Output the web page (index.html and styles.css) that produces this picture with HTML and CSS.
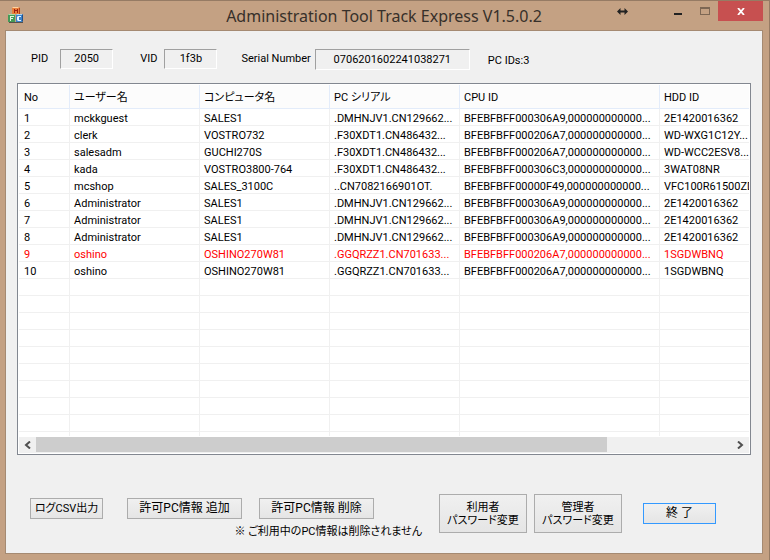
FILE: index.html
```html
<!DOCTYPE html>
<html lang="ja">
<head>
  <meta charset="UTF-8">
  <meta name="viewport" content="width=device-width, initial-scale=1.0">
  <title>Administration Tool Track Express V1.5.0.2</title>
  <link rel="stylesheet" href="styles.css">
</head>
<body>

  <div class="window">
    <header class="title-bar">
      <svg class="app-icon" width="16" height="16" viewBox="0 0 16 16" aria-hidden="true">
        <path d="M1 15h14v1H1z" fill="#55504a"/>
        <path d="M4 1l1-1h6l1 1v6H4z" fill="#e8803c"/>
        <path d="M5 0h6l-1 1H4z" fill="#ffd2a0"/>
        <path d="M11 1h1v6h-1z" fill="#b5421c"/>
        <path d="M6 2h1v1h2V2h1v4H9V4H7v2H6z" fill="#a01c10"/>
        <path d="M0 8l1-1h6v8H0z" fill="#459a58"/>
        <path d="M1 7h6v1H0z" fill="#a8dca8"/>
        <path d="M2 9h4v1H3v1h2v1H3v2H2z" fill="#e4f5e0"/>
        <path d="M8 8l1-1h6v7l-1 1H8z" fill="#3c83c8"/>
        <path d="M9 7h6l-1 1H8z" fill="#acd4f4"/>
        <path d="M14 8l1-1v7l-1 1z" fill="#1f4f8c"/>
        <path d="M10 9h3v1h-2v3h2v1h-3l-1-1v-3z" fill="#e6f2ff"/>
      </svg>
      <h1 class="title">Administration Tool Track Express V1.5.0.2</h1>
      <div class="controls">
        <button type="button" class="ctrl" aria-label="移動">
          <svg width="11" height="7" viewBox="0 0 11 7"><path d="M0 3.5L3.5 0v2.500h4V0L11 3.500 7.500 7V4.500h-4V7z" fill="#222"/></svg>
        </button>
        <span class="spacer"></span>
        <button type="button" class="ctrl" aria-label="最小化">
          <svg width="10" height="10" viewBox="0 0 10 10"><path d="M1 7h8v2H1z" fill="#222"/></svg>
        </button>
        <button type="button" class="ctrl" aria-label="最大化">
          <svg width="10" height="8" viewBox="0 0 10 8"><path d="M0 0h10v8H0zM1 2v5h8V2z" fill="#7d6754" fill-rule="evenodd"/></svg>
        </button>
        <button type="button" class="ctrl close" aria-label="閉じる">
          <svg width="8" height="7" viewBox="0 0 8 7"><path d="M1 0l6 7M7 0L1 7" stroke="#fff" stroke-width="1.800"/></svg>
        </button>
      </div>
    </header>

    <main class="client">
      <div class="device">
        <label for="pid">PID</label>
        <input type="text" id="pid" class="field" value="2050" readonly>
        <label for="vid" class="lab-vid">VID</label>
        <input type="text" id="vid" class="field" value="1f3b" readonly>
        <label for="serial" class="lab-serial">Serial Number</label>
        <input type="text" id="serial" class="field wide" value="0706201602241038271" readonly>
        <span class="pc-ids">PC IDs:3</span>
      </div>

      <div class="list">
        <div class="list-view">
          <table class="pc-table">
            <colgroup>
              <col class="col-no"><col class="col-mid"><col class="col-mid"><col class="col-mid"><col class="col-cpu"><col>
            </colgroup>
            <thead>
              <tr><th>No</th><th>ユーザー名</th><th>コンピュータ名</th><th>PC シリアル</th><th>CPU ID</th><th>HDD ID</th></tr>
            </thead>
            <tbody>
              <tr><td>1</td><td>mckkguest</td><td>SALES1</td><td>.DMHNJV1.CN129662...</td><td>BFEBFBFF000306A9,000000000000...</td><td>2E1420016362</td></tr>
              <tr><td>2</td><td>clerk</td><td>VOSTRO732</td><td>.F30XDT1.CN486432...</td><td>BFEBFBFF000206A7,000000000000...</td><td>WD-WXG1C12Y...</td></tr>
              <tr><td>3</td><td>salesadm</td><td>GUCHI270S</td><td>.F30XDT1.CN486432...</td><td>BFEBFBFF000206A7,000000000000...</td><td>WD-WCC2ESV8...</td></tr>
              <tr><td>4</td><td>kada</td><td>VOSTRO3800-764</td><td>.F30XDT1.CN486432...</td><td>BFEBFBFF000306C3,000000000000...</td><td>3WAT08NR</td></tr>
              <tr><td>5</td><td>mcshop</td><td>SALES_3100C</td><td>..CN7082166901OT.</td><td>BFEBFBFF00000F49,000000000000...</td><td>VFC100R61500ZD</td></tr>
              <tr><td>6</td><td>Administrator</td><td>SALES1</td><td>.DMHNJV1.CN129662...</td><td>BFEBFBFF000306A9,000000000000...</td><td>2E1420016362</td></tr>
              <tr><td>7</td><td>Administrator</td><td>SALES1</td><td>.DMHNJV1.CN129662...</td><td>BFEBFBFF000306A9,000000000000...</td><td>2E1420016362</td></tr>
              <tr><td>8</td><td>Administrator</td><td>SALES1</td><td>.DMHNJV1.CN129662...</td><td>BFEBFBFF000306A9,000000000000...</td><td>2E1420016362</td></tr>
              <tr class="current"><td>9</td><td>oshino</td><td>OSHINO270W81</td><td>.GGQRZZ1.CN701633...</td><td>BFEBFBFF000206A7,000000000000...</td><td>1SGDWBNQ</td></tr>
              <tr><td>10</td><td>oshino</td><td>OSHINO270W81</td><td>.GGQRZZ1.CN701633...</td><td>BFEBFBFF000206A7,000000000000...</td><td>1SGDWBNQ</td></tr>
              <!-- 空行 -->
              <tr><td></td><td></td><td></td><td></td><td></td><td></td></tr>
              <tr><td></td><td></td><td></td><td></td><td></td><td></td></tr>
              <tr><td></td><td></td><td></td><td></td><td></td><td></td></tr>
              <tr><td></td><td></td><td></td><td></td><td></td><td></td></tr>
              <tr><td></td><td></td><td></td><td></td><td></td><td></td></tr>
              <tr><td></td><td></td><td></td><td></td><td></td><td></td></tr>
              <tr><td></td><td></td><td></td><td></td><td></td><td></td></tr>
              <tr><td></td><td></td><td></td><td></td><td></td><td></td></tr>
              <tr><td></td><td></td><td></td><td></td><td></td><td></td></tr>
              <tr><td></td><td></td><td></td><td></td><td></td><td></td></tr>
            </tbody>
          </table>
        </div>
        <div class="scrollbar">
          <button type="button" class="arrow" aria-label="左へ">
            <svg width="7" height="8" viewBox="0 0 7 8"><path d="M6 0.500L2 4l4 3.500" fill="none" stroke="#505050" stroke-width="2"/></svg>
          </button>
          <div class="track"><div class="thumb"></div></div>
          <button type="button" class="arrow" aria-label="右へ">
            <svg width="7" height="8" viewBox="0 0 7 8"><path d="M1 0.500L5 4 1 7.500" fill="none" stroke="#505050" stroke-width="2"/></svg>
          </button>
        </div>
      </div>

      <div class="actions">
        <div class="action-main">
          <div class="action-row">
            <button type="button" class="btn small">ログCSV出力</button>
            <button type="button" class="btn long add">許可PC情報 追加</button>
            <button type="button" class="btn long">許可PC情報 削除</button>
          </div>
          <p class="note">※ ご利用中のPC情報は削除されません</p>
        </div>
        <button type="button" class="btn small tall user">利用者<br>パスワード変更</button>
        <button type="button" class="btn small tall">管理者<br>パスワード変更</button>
        <button type="button" class="btn exit">終 了</button>
      </div>
    </main>
  </div>

</body>
</html>
```
FILE: styles.css
```css
* {
  box-sizing: border-box;
  margin: 0;
  padding: 0;
}
body {
  font-family: Roboto, "Noto Sans CJK JP", sans-serif;
  font-size: 11px;
  line-height: 16px;
  color: #000;
}
button, input {
  font: inherit;
  color: inherit;
}

/* ウィンドウ枠 */
.window {
  display: flex;
  flex-direction: column;
  height: 100vh;
  padding: 0 6px 6px 5px;
  background: #c4a183;
  border-top: 1px solid #967b64;
  border-right: 1px solid #967b64;
}
.title-bar {
  display: grid;
  grid-template-columns: 1fr auto 1fr;
  height: 29px;
}
.app-icon {
  margin: 6px 0 0 3px;
}
.title {
  font-family: "Noto Sans", sans-serif;
  font-size: 16px;
  font-weight: 400;
  line-height: 30px;
  color: #37302a;
}
.controls {
  display: flex;
  justify-content: flex-end;
  height: 20px;
}
.ctrl {
  display: flex;
  align-items: center;
  justify-content: center;
  width: 27px;
  border: 0;
  background: none;
}
.spacer {
  width: 28px;
}
.close {
  width: 45px;
  background: #c75050;
}

/* クライアント領域 */
.client {
  flex: 1;
  display: flex;
  flex-direction: column;
  min-height: 0;
  padding: 18px 11px 15px;
  background: #f0f0f0;
  border: 1px solid #a58a72;
}
.device {
  display: flex;
  align-items: flex-start;
  height: 34px;
  padding-left: 14px;
  line-height: 20px;
}
.field {
  width: 53px;
  height: 20px;
  margin-left: 12px;
  border: 1px solid #a0a0a0;
  border-right-color: #fff;
  border-bottom-color: #fff;
  background: none;
  text-align: center;
  outline: 0;
}
.field.wide {
  width: 155px;
  height: 21px;
  margin-left: 4px;
}
.device .lab-vid {
  margin-left: 27px;
}
.field + .lab-serial {
  margin-left: 24px;
}
#vid {
  margin-left: 7px;
}
.pc-ids {
  margin-left: 18px;
  padding-top: 2px;
}

/* PC一覧 */
.list {
  flex: 1;
  display: flex;
  flex-direction: column;
  min-height: 0;
  padding: 1px;
  background: #fff;
  border: 1px solid #828790;
}
.list-view {
  flex: 1;
  min-height: 0;
  margin-bottom: 1px;
  overflow: hidden;
}
.pc-table {
  width: 100%;
  table-layout: fixed;
  border-collapse: separate;
  border-spacing: 0;
}
.col-no { width: 51px; }
.col-mid { width: 130px; }
.col-cpu { width: 200px; }
.pc-table th {
  height: 24px;
  padding: 2px 0 0 4px;
  background: #fcfcfc;
  border-right: 1px solid #e3ecfa;
  border-bottom: 1px solid #e3ecfa;
  font-weight: 400;
  text-align: left;
  white-space: nowrap;
  font-feature-settings: "palt";
}
.pc-table td {
  height: 17px;
  padding: 3px 0 0 4px;
  border-right: 1px solid #f0f0f0;
  border-bottom: 1px solid #f0f0f0;
  line-height: 13px;
  white-space: nowrap;
}
.pc-table th:first-child,
.pc-table td:first-child {
  padding-left: 5px;
}
.pc-table th:last-child,
.pc-table td:last-child {
  border-right: 0;
}
.current {
  color: #f00;
}

.scrollbar {
  display: flex;
  height: 16px;
  background: #f0f0f0;
}
.arrow {
  display: flex;
  align-items: center;
  justify-content: center;
  width: 17px;
  border: 0;
  background: none;
}
.track {
  flex: 1;
}
.thumb {
  width: 82%;
  height: 15px;
  background: #cdcdcd;
}

/* 下部ボタン */
.actions {
  display: flex;
  align-items: flex-start;
  padding: 39px 0 0 13px;
  font-size: 12px;
  line-height: 13px;
  font-feature-settings: "palt";
}
.action-main {
  width: 392px;
  padding-top: 4px;
}
.action-row {
  display: flex;
}
.btn {
  width: 73px;
  height: 21px;
  border: 1px solid #acacac;
  background: linear-gradient(#f0f0f0, #e5e5e5);
  white-space: nowrap;
}
.btn.small {
  font-size: 11px;
}
.btn.long {
  width: 115px;
  margin-left: 17px;
}
.btn.add {
  margin-left: 24px;
}
.btn.tall {
  width: 88px;
  height: 39px;
  margin-left: 7px;
}
.btn.user {
  margin-left: 17px;
}
.btn.exit {
  margin: 9px 0 0 21px;
  border-color: #3399ff;
}
.note {
  margin-top: 6px;
  font-size: 11px;
  text-align: right;
  white-space: nowrap;
}
```
